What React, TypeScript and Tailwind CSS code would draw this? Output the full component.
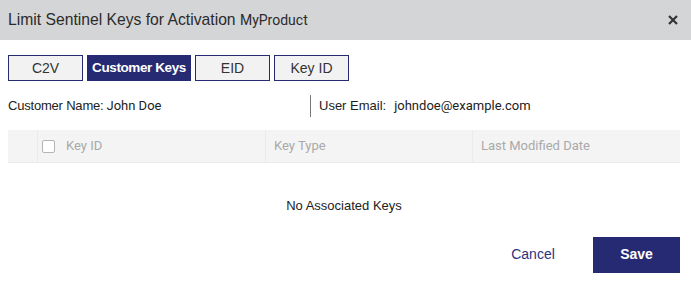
import { useState } from "react";

const tabs = ["C2V", "Customer Keys", "EID", "Key ID"];

export default function App() {
  const [active, setActive] = useState("Customer Keys");

  return (
    <div className="w-[691px] h-[281px] bg-white font-['Liberation_Sans',Arial,sans-serif] text-[#222] overflow-hidden">
      <div className="flex h-[40px] items-center justify-between bg-[#d4d5d7] pl-2 pr-[13px]">
        <h1 className="whitespace-nowrap text-[15.7px] leading-none text-[#2b2b2b]">
          Limit Sentinel Keys for Activation{" "}
          <span className="font-['Roboto',sans-serif] text-[14px]">MyProduct</span>
        </h1>
        <button type="button" className="text-[#333]" aria-label="Close">
          <svg width="10" height="10" viewBox="0 0 10 10">
            <path d="M1 1L9 9M9 1L1 9" stroke="currentColor" strokeWidth="2.2" />
          </svg>
        </button>
      </div>

      <div className="pl-2 pr-[11px]">
        <div className="mt-[15px] flex gap-[4px]">
          {tabs.map((t) => (
            <button
              key={t}
              type="button"
              onClick={() => setActive(t)}
              className={
                t === active
                  ? "h-[26px] w-[104px] whitespace-nowrap border border-[#262a72] bg-[#262a72] px-0 text-[13.5px] font-bold tracking-[-0.4px] text-white"
                  : "h-[26px] w-[75px] whitespace-nowrap border border-[#262a72] bg-[#f2f2f2] px-0 text-[14px] text-[#333]"
              }
            >
              {t}
            </button>
          ))}
        </div>

        <div className="mt-[13px] flex h-[23px] items-center text-[13px]">
          <div className="flex w-[302px] items-center">
            <span className="tracking-[-0.2px] text-[#222]">Customer Name:</span>
            <span className="ml-[3px] font-['Roboto',sans-serif] text-[#222]">John Doe</span>
          </div>
          <div className="h-[22px] w-px bg-[#777]" />
          <span className="ml-[8px] text-[#222]">User Email:</span>
          <span className="ml-[8px] font-['Roboto',sans-serif] text-[#222]">johndoe@example.com</span>
        </div>

        <div className="mt-[13px] flex h-[33px] items-center border-b border-[#ececec] bg-[#f4f4f4] font-['Roboto',sans-serif] text-[13px] text-[#a9a9a9]">
          <div className="h-full w-[30px] border-r border-[#ebebeb]" />
          <div className="flex h-full w-[228px] items-center border-r border-[#ebebeb] pl-[4px]">
            <span className="h-[13px] w-[13px] rounded-[2px] border border-[#b5b5b5] bg-white" />
            <span className="ml-[11px]">Key ID</span>
          </div>
          <div className="flex h-full w-[207px] items-center border-r border-[#ebebeb] pl-[8px]">Key Type</div>
          <div className="flex h-full flex-1 items-center pl-[8px]">Last Modified Date</div>
        </div>

        <div className="mt-[33px] text-center text-[13px] text-[#222]">No Associated Keys</div>

        <div className="mt-[21px] flex items-center justify-end gap-[20px]">
          <button type="button" className="w-[80px] text-[14px] text-[#2d3380]">
            Cancel
          </button>
          <button type="button" className="h-[36px] w-[87px] bg-[#262a72] text-[14px] font-bold text-white">
            Save
          </button>
        </div>
      </div>
    </div>
  );
}
